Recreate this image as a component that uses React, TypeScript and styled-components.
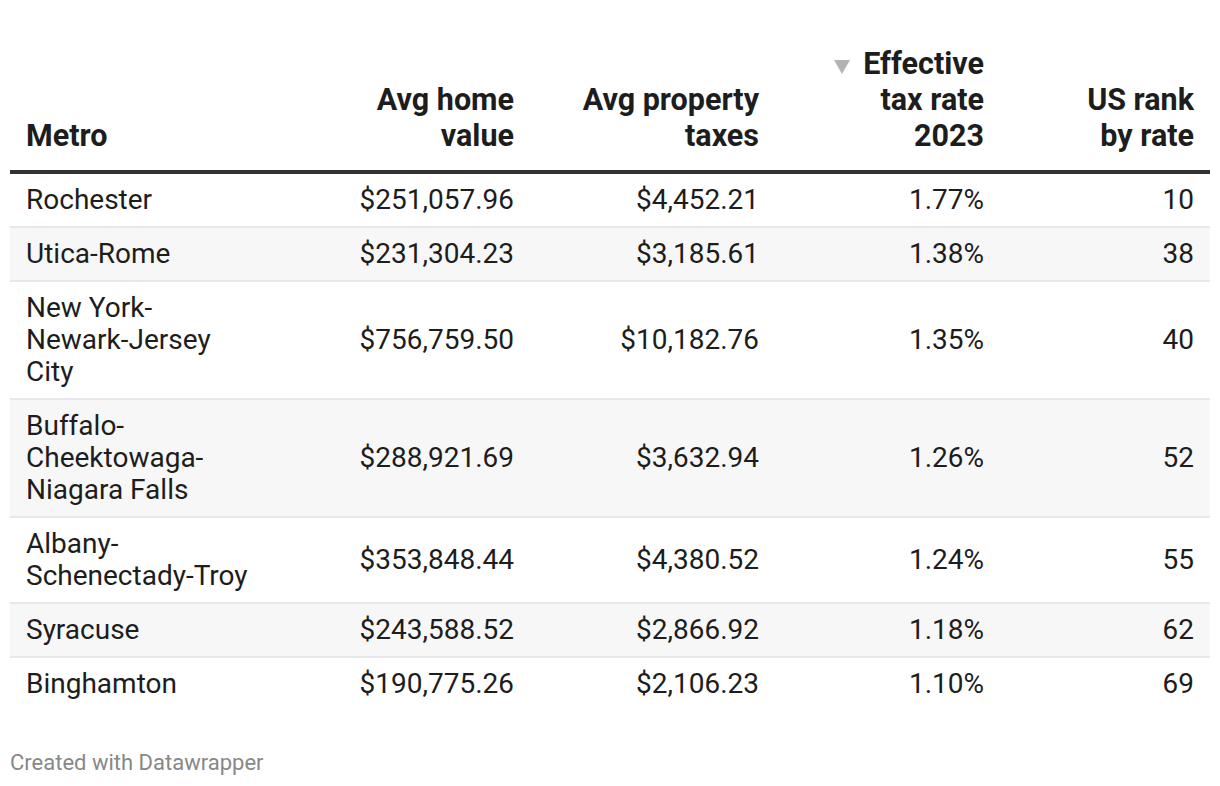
import styled, { createGlobalStyle } from "styled-components";

const GlobalStyle = createGlobalStyle`
    html, body {
        margin: 0;
        padding: 0;
        background: #ffffff;
    }
    body {
        font-family: Roboto, "Liberation Sans", Arial, sans-serif;
        color: #1d1d1d;
    }
`;

export const Chart = styled.section`
    width: 1200px;
    padding: 40px 10px 0;
`;

const Table = styled.table`
    width: 1200px;
    border-collapse: collapse;
    table-layout: fixed;
    font-size: 28px;
`;

const HeadCell = styled.th<{ $align?: "left" | "right" }>`
    padding: 6px 16px 16px 16px;
    font-size: 30.5px;
    font-weight: 700;
    line-height: 36px;
    vertical-align: bottom;
    text-align: ${(p) => p.$align ?? "right"};
    border-bottom: 4px solid #333333;
    color: #1d1d1d;
`;

const SortArrow = styled.svg`
    display: inline-block;
    width: 16px;
    height: 14px;
    margin-right: 13px;
    vertical-align: 0;
    fill: #b3b3b3;
`;

const Row = styled.tr<{ $shaded: boolean }>`
    background: ${(p) => (p.$shaded ? "#f7f7f7" : "#ffffff")};
    border-bottom: 2px solid #e8e8e8;

    &:last-child {
        border-bottom: none;
    }
`;

const Cell = styled.td<{ $align?: "left" | "right" }>`
    padding: 10px 16px 10px 16px;
    line-height: 32px;
    vertical-align: middle;
    text-align: ${(p) => p.$align ?? "right"};
    font-variant-numeric: tabular-nums;
`;

const Footer = styled.div`
    margin-top: 41px;
    font-size: 22px;
    line-height: 24px;
    color: #888888;
`;

interface MetroRow {
    metro: string;
    home: string;
    taxes: string;
    rate: string;
    rank: string;
}

const rows: MetroRow[] = [
    { metro: "Rochester", home: "$251,057.96", taxes: "$4,452.21", rate: "1.77%", rank: "10" },
    { metro: "Utica-Rome", home: "$231,304.23", taxes: "$3,185.61", rate: "1.38%", rank: "38" },
    { metro: "New York-Newark-Jersey City", home: "$756,759.50", taxes: "$10,182.76", rate: "1.35%", rank: "40" },
    { metro: "Buffalo-Cheektowaga-Niagara Falls", home: "$288,921.69", taxes: "$3,632.94", rate: "1.26%", rank: "52" },
    { metro: "Albany-Schenectady-Troy", home: "$353,848.44", taxes: "$4,380.52", rate: "1.24%", rank: "55" },
    { metro: "Syracuse", home: "$243,588.52", taxes: "$2,866.92", rate: "1.18%", rank: "62" },
    { metro: "Binghamton", home: "$190,775.26", taxes: "$2,106.23", rate: "1.10%", rank: "69" },
];

export default function App() {
    return (
        <>
            <GlobalStyle />
            <Chart>
                <Table>
                    <colgroup>
                        <col style={{ width: 255 }} />
                        <col style={{ width: 265 }} />
                        <col style={{ width: 245 }} />
                        <col style={{ width: 225 }} />
                        <col style={{ width: 210 }} />
                    </colgroup>
                    <thead>
                        <tr>
                            <HeadCell $align="left">Metro</HeadCell>
                            <HeadCell>Avg home<br />value</HeadCell>
                            <HeadCell>Avg property<br />taxes</HeadCell>
                            <HeadCell>
                                <SortArrow viewBox="0 0 16 14">
                                    <path d="M0 0 H16 L8 14 Z" />
                                </SortArrow>
                                Effective<br />tax rate<br />2023
                            </HeadCell>
                            <HeadCell>US rank<br />by rate</HeadCell>
                        </tr>
                    </thead>
                    <tbody>
                        {rows.map((r, i) => (
                            <Row key={r.metro} $shaded={i % 2 === 1}>
                                <Cell $align="left">{r.metro}</Cell>
                                <Cell>{r.home}</Cell>
                                <Cell>{r.taxes}</Cell>
                                <Cell>{r.rate}</Cell>
                                <Cell>{r.rank}</Cell>
                            </Row>
                        ))}
                    </tbody>
                </Table>
                <Footer>Created with Datawrapper</Footer>
            </Chart>
        </>
    );
}
